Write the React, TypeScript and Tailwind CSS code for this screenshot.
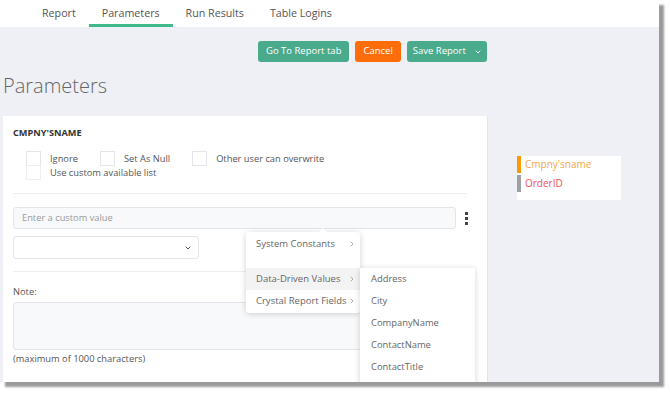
import { ChevronDown, ChevronRight } from "lucide-react";

const font = { fontFamily: '"Open Sans", "Noto Sans", sans-serif' };

function Check({ label }: { label: string }) {
  return (
    <label className="flex items-center gap-[9px]">
      <span className="h-[15px] w-[15px] border border-[#e3e5ea] bg-white" />
      <span>{label}</span>
    </label>
  );
}

function MenuItem({ label, active }: { label: string; active?: boolean }) {
  return (
    <div
      className={`flex h-[22px] items-center justify-between whitespace-nowrap pl-[10px] pr-[4px] ${active ? "bg-[#f3f3f3]" : ""}`}
    >
      <span>{label}</span>
      <ChevronRight size={8} strokeWidth={2} className="text-[#888]" />
    </div>
  );
}

export default function App() {
  const tabs = ["Report", "Parameters", "Run Results", "Table Logins"];
  const fields = ["Address", "City", "CompanyName", "ContactName", "ContactTitle"];
  return (
    <div className="h-[393px] w-[670px] overflow-hidden bg-white" style={font}>
      <div className="relative flex h-[382px] w-[659px] flex-col overflow-hidden bg-[#eef0f5] shadow-[5px_5px_2px_#9a9a9a]">
        {/* tabs */}
        <div className="flex h-[27px] shrink-0 bg-white pl-[29px] text-[10.7px] text-[#555]">
          {tabs.map((t) => (
            <div
              key={t}
              className={`flex items-center px-[13px] ${t === "Parameters" ? "border-b-[3px] border-[#3fba8a] pt-[3px]" : ""}`}
            >
              {t}
            </div>
          ))}
        </div>

        {/* actions */}
        <div className="flex h-[48px] shrink-0 items-start gap-[6px] pl-[258px] pt-[14px] text-[9.5px] text-white">
          <button className="h-[21px] rounded-[3px] bg-[#4aaa8c] px-[8px]">Go To Report tab</button>
          <button className="h-[21px] rounded-[3px] bg-[#ff6d0a] px-[8px]">Cancel</button>
          <button className="flex h-[21px] items-center gap-[8px] rounded-[3px] bg-[#4aaa8c] pl-[6px] pr-[5px]">
            Save Report
            <ChevronDown size={8} strokeWidth={3} />
          </button>
        </div>

        <div className="flex flex-1">
          {/* left */}
          <div className="flex w-[488px] shrink-0 flex-col pl-[3px]">
            <h1 className="h-[41px] text-[20px] font-light leading-[22px] text-[#666]">Parameters</h1>
            <div className="relative flex-1 border-r border-[#e4e6eb] bg-white px-[10px] pt-[10px] text-[9.3px] leading-[14px] text-[#555]">
              <div className="text-[9.2px] font-bold text-[#333]">CMPNY'SNAME</div>
              <div className="mt-[11px] pl-[13px]">
                <div className="flex gap-[22px]">
                  <Check label="Ignore" />
                  <Check label="Set As Null" />
                  <Check label="Other user can overwrite" />
                </div>
                <div className="-mt-[1px] flex items-start gap-[9px]">
                  <span className="h-[15px] w-[15px] border border-[#eceef2] bg-white" />
                  <span className="mt-[1px]">Use custom available list</span>
                </div>
              </div>
              <div className="mt-[13px] mr-[10px] border-t border-[#eceef2]" />
              <div className="mt-[13px] flex items-center">
                <div className="flex h-[22px] w-[443px] items-center rounded-[3px] border border-[#e2e5ea] bg-[#f8f9fb] px-[8px] text-[#999]">
                  Enter a custom value
                </div>
                <div className="ml-[9px] flex flex-col gap-[2px]">
                  <span className="h-[3px] w-[3px] bg-[#444]" />
                  <span className="h-[3px] w-[3px] bg-[#444]" />
                  <span className="h-[3px] w-[3px] bg-[#444]" />
                </div>
              </div>
              <div className="mt-[7px] flex h-[23px] w-[186px] items-center justify-end rounded-[3px] border border-[#e2e5ea] bg-white pr-[6px]">
                <ChevronDown size={8} strokeWidth={3} className="text-[#555]" />
              </div>
              <div className="mt-[12px] mr-[10px] border-t border-[#eceef2]" />
              <div className="mt-[13px]">Note:</div>
              <div className="mt-[3px] mr-[10px] h-[48px] rounded-[3px] border border-[#e2e5ea] bg-[#f8f9fb]" />
              <div className="mt-[2px]">(maximum of 1000 characters)</div>

              {/* context menu */}
              <div className="absolute left-[243px] top-[116px] w-[114px] rounded-[3px] bg-white py-[1px] text-[9.5px] text-[#666] shadow-[0_1px_6px_rgba(0,0,0,0.18)]">
                <div className="absolute -top-[4px] left-[73px] h-0 w-0 border-x-[4px] border-b-[4px] border-x-transparent border-b-white" />
                <MenuItem label="System Constants" />
                <div className="h-[13px]" />
                <MenuItem label="Data-Driven Values" active />
                <MenuItem label="Crystal Report Fields" />
              </div>
              <div className="absolute left-[357px] top-[152px] w-[115px] bg-white text-[9.4px] text-[#666] shadow-[0_1px_6px_rgba(0,0,0,0.18)]">
                {fields.map((f) => (
                  <div key={f} className="flex h-[22px] items-center px-[11px]">
                    {f}
                  </div>
                ))}
                <div className="h-[8px]" />
              </div>
            </div>
          </div>

          {/* right list */}
          <div className="flex-1 pl-[29px] pt-[81px]">
            <div className="w-[104px] bg-white pb-[8px] text-[10px]">
              <div className="flex h-[17px] items-center">
                <span className="h-full w-[4px] bg-[#ff9900]" />
                <span className="ml-[4px] text-[#f7a647]">Cmpny'sname</span>
              </div>
              <div className="mt-[2px] flex h-[17px] items-center">
                <span className="h-full w-[4px] bg-[#a0a0a0]" />
                <span className="ml-[4px] text-[#f0505a]">OrderID</span>
              </div>
            </div>
          </div>
        </div>
      </div>
    </div>
  );
}
